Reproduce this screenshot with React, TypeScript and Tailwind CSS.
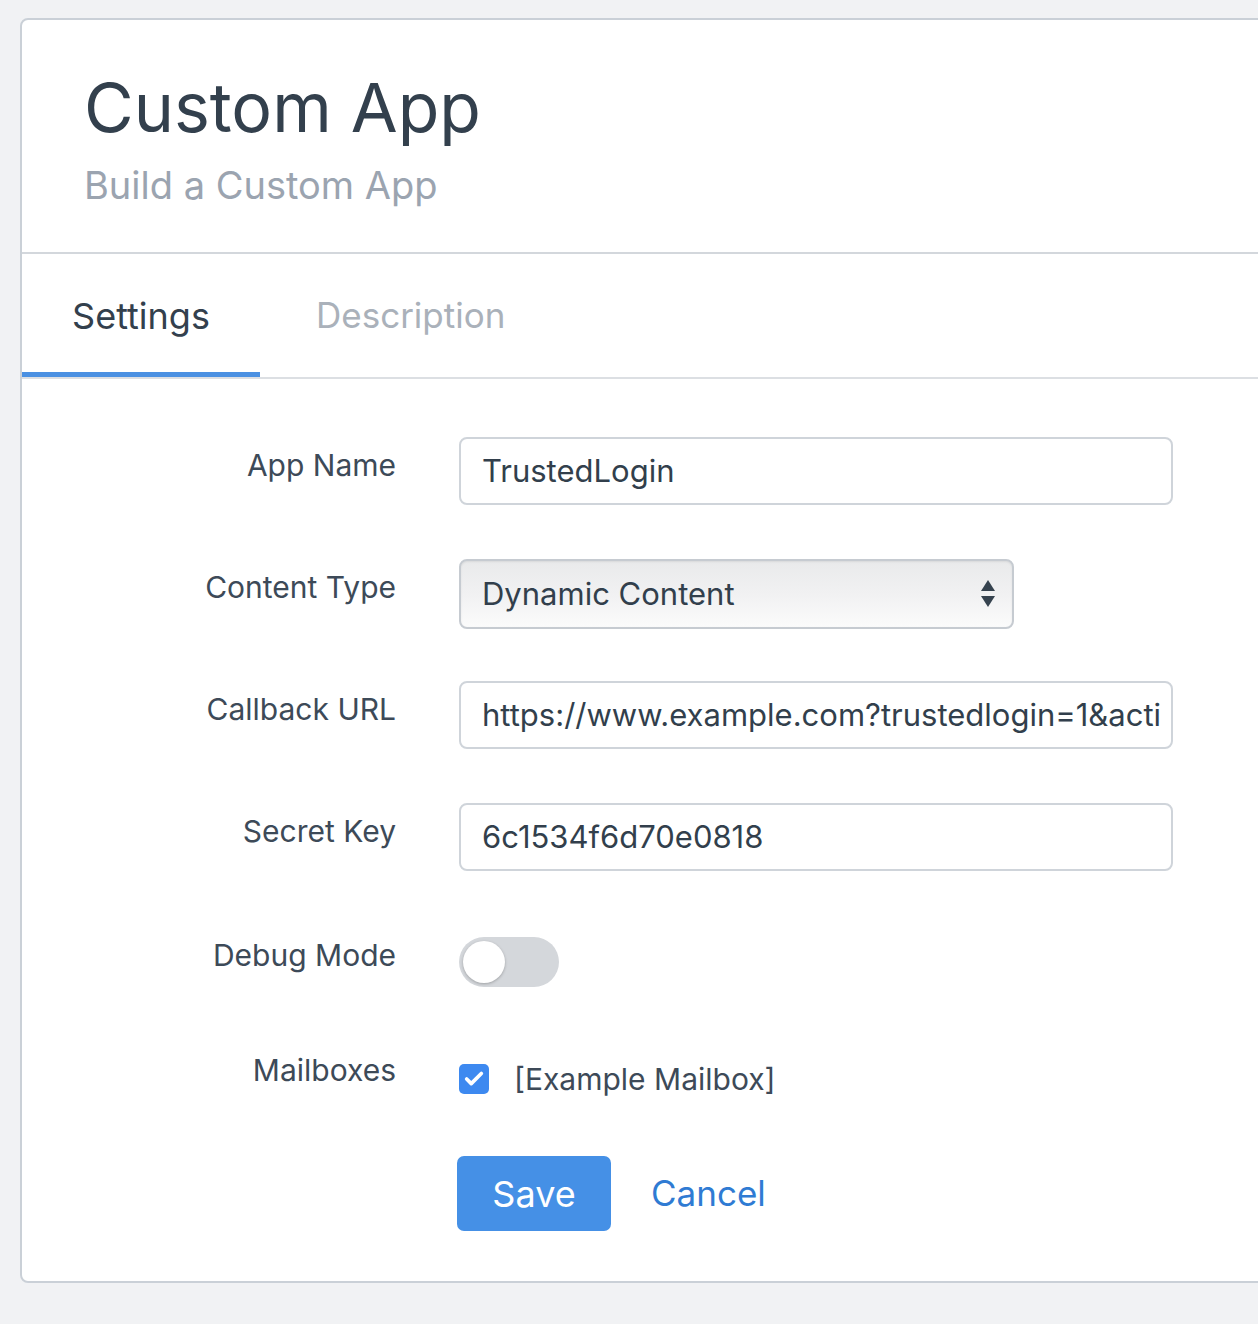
import { Check } from "lucide-react";

const font = { fontFamily: "Inter, 'Noto Sans', sans-serif" };

function Label({ children, pt = "pt-[8px]" }: { children: React.ReactNode; pt?: string }) {
  return (
    <div className={`text-right text-[30px] leading-[40px] text-[#3d4a58] ${pt}`}>{children}</div>
  );
}

function TextInput({ value }: { value: string }) {
  return (
    <div className="flex h-[68px] items-center overflow-hidden whitespace-nowrap rounded-[8px] border-2 border-[#cfd4da] bg-white pl-[21px] text-[31px] text-[#323f4c]">
      {value}
    </div>
  );
}

export default function App() {
  return (
    <div className="min-h-[1324px] w-full overflow-hidden bg-[#f1f2f4] pl-[20px] pt-[18px]" style={font}>
      <div className="w-[1300px] rounded-tl-[8px] rounded-bl-[8px] border-2 border-[#cad0d7] bg-white">
        {/* header */}
        <div className="h-[234px] border-b-2 border-[#d3d7dc] pl-[62px] pt-[47px]">
          <h1 className="text-[68px] leading-[80px] text-[#33404d]">Custom App</h1>
          <p className="mt-[14px] text-[38px] leading-[48px] text-[#9ba4b0]">Build a Custom App</p>
        </div>

        {/* tabs */}
        <div className="flex h-[125px] border-b-2 border-[#dcdfe3]">
          <div className="flex w-[238px] items-center justify-center border-b-[5px] border-[#4a90e2] pt-[5px] text-[36px] text-[#33404d]">
            Settings
          </div>
          <div className="flex items-center pl-[56px] text-[35px] text-[#aab1ba]">Description</div>
        </div>

        {/* form */}
        <div className="grid grid-cols-[374px_714px] gap-x-[63px] pb-[50px] pt-[58px]">
          <Label>App Name</Label>
          <TextInput value="TrustedLogin" />

          <div className="col-span-2 h-[54px]" />

          <Label>Content Type</Label>
          <div className="flex h-[70px] w-[555px] items-center justify-between rounded-[8px] border-2 border-[#c6cbd1] bg-gradient-to-b from-[#e9eaeb] via-[#f1f1f2] to-[#fbfbfb] pl-[21px] pr-[16px] text-[31px] text-[#323f4c] shadow-[inset_0_1px_2px_rgba(0,0,0,0.08)]">
            <span>Dynamic Content</span>
            <svg width="16" height="30" viewBox="0 0 16 30">
              <path d="M8 1 L15 12 L1 12 Z" fill="#36434f" />
              <path d="M1 17 L15 17 L8 28 Z" fill="#36434f" />
            </svg>
          </div>

          <div className="col-span-2 h-[52px]" />

          <Label>Callback URL</Label>
          <TextInput value="https://www.example.com?trustedlogin=1&acti" />

          <div className="col-span-2 h-[54px]" />

          <Label>Secret Key</Label>
          <TextInput value="6c1534f6d70e0818" />

          <div className="col-span-2 h-[53px]" />

          <Label pt="pt-[11px]">Debug Mode</Label>
          <div className="pt-[13px]">
            <div className="flex h-[50px] w-[100px] items-center rounded-full bg-[#d4d7db] pl-[4px]">
              <div className="h-[42px] w-[42px] rounded-full bg-white shadow-[0_1px_3px_rgba(0,0,0,0.25)]" />
            </div>
          </div>

          <div className="col-span-2 h-[63px]" />

          <Label pt="pt-[0px]">Mailboxes</Label>
          <div className="flex items-center gap-[25px] pt-[7px]">
            <div className="flex h-[30px] w-[30px] items-center justify-center rounded-[5px] bg-[#3d89f0]">
              <Check className="h-[22px] w-[22px] text-white" strokeWidth={4} />
            </div>
            <span className="text-[30px] leading-[44px] text-[#3d4a58]">[Example Mailbox]</span>
          </div>

          <div className="col-span-2 h-[55px]" />

          <div />
          <div className="ml-[-2px] flex items-center gap-[40px]">
            <button className="h-[75px] w-[154px] rounded-[7px] bg-[#4590e6] text-[36px] text-white">Save</button>
            <span className="text-[35px] text-[#2f7bd3]">Cancel</span>
          </div>
        </div>
      </div>
    </div>
  );
}
